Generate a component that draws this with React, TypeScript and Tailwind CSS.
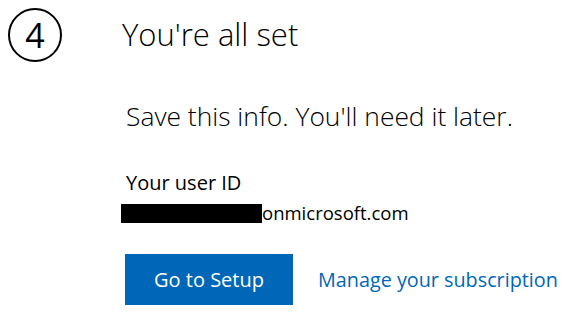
import React from 'react';

const font = { fontFamily: '"Open Sans", "Noto Sans", sans-serif' };

const App: React.FC = () => {
  return (
    <div className="w-[573px] h-[317px] bg-white text-black overflow-hidden" style={font}>
      <div className="flex items-start pt-[8px] pl-[8px]">
        <div className="w-[54px] h-[54px] rounded-full border-2 border-black flex items-center justify-center shrink-0">
          <span className="text-[34px] leading-none font-normal">4</span>
        </div>
        <h1 className="ml-[60px] mt-[6px] text-[31px] leading-[40px] font-light">You're all set</h1>
      </div>

      <div className="pl-[126px] mt-[37px]">
        <p className="text-[26.4px] leading-[34px] font-light">Save this info. You'll need it later.</p>

        <div className="mt-[35px] text-[20px] leading-[30px]">
          <div>Your user ID</div>
          <div className="flex items-center -ml-[5px]">
            <span className="inline-block w-[141px] h-[19px] bg-black" />
            <span className="text-[18.5px]">onmicrosoft.com</span>
          </div>
        </div>

        <div className="mt-[26px] flex items-center">
          <button className="w-[168px] h-[51px] bg-[#0067b8] text-white text-[20px] -ml-[1px]">
            Go to Setup
          </button>
          <a href="#" className="ml-[25px] text-[#0067b8] text-[19.8px]">
            Manage your subscription
          </a>
        </div>
      </div>
    </div>
  );
};

export default App;
